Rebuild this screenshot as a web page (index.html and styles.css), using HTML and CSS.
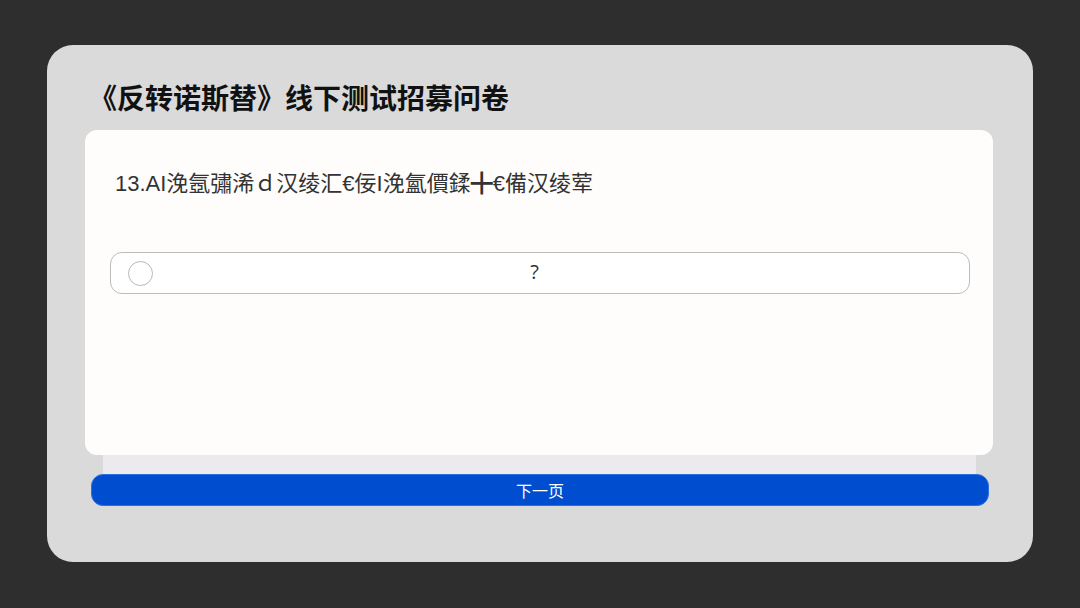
FILE: index.html
```html
<!DOCTYPE html>
<html lang="zh-CN">
<head>
<meta charset="utf-8">
<title>《反转诺斯替》线下测试招募问卷</title>
<link rel="stylesheet" href="styles.css">
</head>
<body>
<div class="panel">
  <h1 class="title">《反转诺斯替》线下测试招募问卷</h1>
  <div class="card">
    <p class="question">13.AI浼氬彇浠ｄ汉绫汇€佞I浼氳價鍒╋€備汉绫荤</p>
    <div class="option">
      <span class="radio"></span>
      <span class="label">?</span>
    </div>
  </div>
  <div class="stack"></div>
  <button class="next">下一页</button>
</div>
</body>
</html>
```

FILE: styles.css
```css
html, body {
  margin: 0;
  padding: 0;
}
body {
  background: #2e2e2e;
  width: 1080px;
  height: 608px;
  padding: 45px 0 0 47px;
  box-sizing: border-box;
  font-family: "Liberation Sans", "Noto Sans CJK SC", sans-serif;
}
.panel {
  width: 986px;
  height: 517px;
  background: #dadada;
  border-radius: 26px;
  box-sizing: border-box;
  padding: 32px 0 0 38px;
}
.title {
  margin: 0 0 13px 4px;
  height: 40px;
  line-height: 40px;
  font-family: "Noto Sans CJK SC", sans-serif;
  font-size: 28px;
  font-weight: 700;
  color: #111;
  letter-spacing: 0;
}
.card {
  width: 908px;
  height: 325px;
  background: #fffdfb;
  border-radius: 12px;
  box-sizing: border-box;
  padding: 39px 23px 0 25px;
  position: relative;
  z-index: 1;
}
.question {
  margin: 0 0 53px 5px;
  height: 30px;
  line-height: 30px;
  font-size: 22px;
  color: #333;
}
.option {
  height: 42px;
  background: #fff;
  border: 1px solid #bcbcbc;
  border-radius: 12px;
  box-sizing: border-box;
  display: flex;
  align-items: center;
  padding: 0 53px 0 17px;
}
.radio {
  width: 25px;
  height: 25px;
  border: 1px solid #b8b8b8;
  border-radius: 50%;
  box-sizing: border-box;
  flex: none;
}
.label {
  flex: 1;
  text-align: center;
  font-family: "Open Sans", "Noto Sans CJK SC", sans-serif;
  font-size: 20px;
  line-height: 1;
  margin-bottom: 3px;
  color: #333;
}
.stack {
  width: 873px;
  height: 19px;
  margin-left: 18px;
  background: #ebebed;
}
.next {
  display: block;
  width: 898px;
  height: 32px;
  margin: 0 0 0 6px;
  background: #004ecf;
  border: 1px solid #2d6fe0;
  border-radius: 12px;
  color: #fff;
  font-family: "Noto Sans CJK SC", sans-serif;
  font-size: 16px;
  padding: 0;
}
```
